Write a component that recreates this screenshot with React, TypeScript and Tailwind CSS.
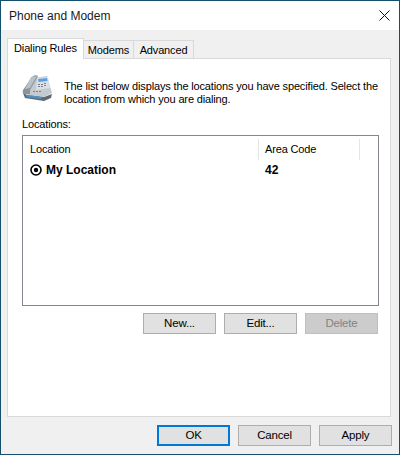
const PhoneIcon = () => (
  <svg width="32" height="28" viewBox="0 0 32 28" className="shrink-0">
    <path d="M1 19 L3 24 L22 27 L29 24 L30 20 L22 23 Z" fill="#5f6a74" />
    <path d="M2 17 L12 4 L25 2 L30 19 L22 23 L4 21 Z" fill="#c3cad0" />
    <path d="M1 16 L10 3 C12 1 15 1 16 2 L15 4 L8 16 L8 20 L3 20 C1 20 0 18 1 16 Z" fill="#8a949d" />
    <path d="M9 3 L15 2 L8 14 L3 15 Z" fill="#b9c1c8" />
    <path d="M15 4 L26 3 L28 14 L14 16 Z" fill="#dbe0e4" />
    <path d="M16 5 L25 4 L25.5 7 L16.5 8 Z" fill="#5c9fe0" />
    <path d="M4 21 L20 23 L19 25 L5 23 Z" fill="#4d93c9" />
    <g fill="#77828c">
      <rect x="16" y="10" width="2" height="1" />
      <rect x="19" y="10" width="2" height="1" />
      <rect x="22" y="9" width="2" height="1" />
      <rect x="16" y="12" width="2" height="1" />
      <rect x="19" y="12" width="2" height="1" />
      <rect x="22" y="11" width="2" height="1" />
      <rect x="11" y="17" width="2" height="1" />
      <rect x="14" y="17" width="2" height="1" />
      <rect x="17" y="17" width="2" height="1" />
    </g>
  </svg>
)

const RadioMark = () => (
  <svg width="12" height="12" viewBox="0 0 12 12" className="shrink-0">
    <circle cx="6" cy="6" r="5" fill="none" stroke="#000" strokeWidth="1.6" />
    <circle cx="6" cy="6" r="2.2" fill="#000" />
  </svg>
)

const DialogButton = ({ label, primary, disabled }: { label: string; primary?: boolean; disabled?: boolean }) => (
  <button
    className={`w-[73px] h-[21px] text-[11.5px] tracking-[-0.2px] leading-none ${
      primary
        ? 'border-2 border-[#0078d7] bg-[#e1e1e1] text-black'
        : disabled
          ? 'border border-[#bfbfbf] bg-[#cccccc] text-[#838383]'
          : 'border border-[#adadad] bg-[#e1e1e1] text-black'
    }`}
  >
    {label}
  </button>
)

export default function App() {
  return (
    <div className="w-[400px] h-[455px] flex flex-col border border-[#14506e] bg-[#f0f0f0] text-[11px] tracking-[-0.15px] text-black font-['Liberation_Sans',sans-serif] overflow-hidden">
      <div className="h-[29px] bg-white flex items-center justify-between pl-2 pr-[9px] shrink-0">
        <span className="text-[12px] tracking-normal text-[#1a1a1a]">Phone and Modem</span>
        <svg width="11" height="11" viewBox="0 0 11 11">
          <path d="M0.5 0.5 L10.5 10.5 M10.5 0.5 L0.5 10.5" stroke="#111" strokeWidth="1" fill="none" />
        </svg>
      </div>

      <div className="flex-1 flex flex-col pt-2 px-[6px] pb-2">
        <div className="flex items-end h-[20px] relative z-10">
          <div className="h-[21px] -mb-[1px] w-[77px] bg-white border border-b-0 border-[#d9d9d9] flex items-center justify-center pb-[2px]">
            Dialing Rules
          </div>
          <div className="h-[18px] w-[50px] bg-[#f0f0f0] border border-l-0 border-b-0 border-[#d9d9d9] flex items-center justify-center pt-[1px]">
            Modems
          </div>
          <div className="h-[18px] w-[60px] bg-[#f0f0f0] border border-l-0 border-b-0 border-[#d9d9d9] flex items-center justify-center pt-[1px]">
            Advanced
          </div>
        </div>

        <div className="h-[359px] w-[384px] bg-white border border-[#d9d9d9] pt-[15px] pl-[14px] pr-[11px] flex flex-col">
          <div className="flex gap-[10px] h-[34px]">
            <PhoneIcon />
            <p className="leading-[13px] pt-[6px]">
              The list below displays the locations you have specified. Select the location from which you are dialing.
            </p>
          </div>

          <div className="mt-[9px] leading-[15px]">Locations:</div>

          <div className="mt-[3px] h-[171px] w-[357px] border border-[#828790] flex flex-col">
            <div className="flex h-[24px] shrink-0 pt-[3px]">
              <div className="w-[236px] border-r border-[#e5e5e5] pl-[7px] flex items-center">Location</div>
              <div className="w-[101px] border-r border-[#e5e5e5] pl-[6px] flex items-center">Area Code</div>
            </div>
            <div className="flex h-[19px] font-bold items-center text-[12px] tracking-normal">
              <div className="w-[236px] pl-[7px] flex items-center gap-[4px]">
                <RadioMark />
                My Location
              </div>
              <div className="pl-[6px]">42</div>
            </div>
          </div>

          <div className="mt-[7px] flex gap-2 w-[357px] justify-end pr-[1px]">
            <DialogButton label="New..." />
            <DialogButton label="Edit..." />
            <DialogButton label="Delete" disabled />
          </div>
        </div>

        <div className="mt-2 flex gap-2 justify-end pr-[1px]">
          <DialogButton label="OK" primary />
          <DialogButton label="Cancel" />
          <DialogButton label="Apply" />
        </div>
      </div>
    </div>
  )
}
